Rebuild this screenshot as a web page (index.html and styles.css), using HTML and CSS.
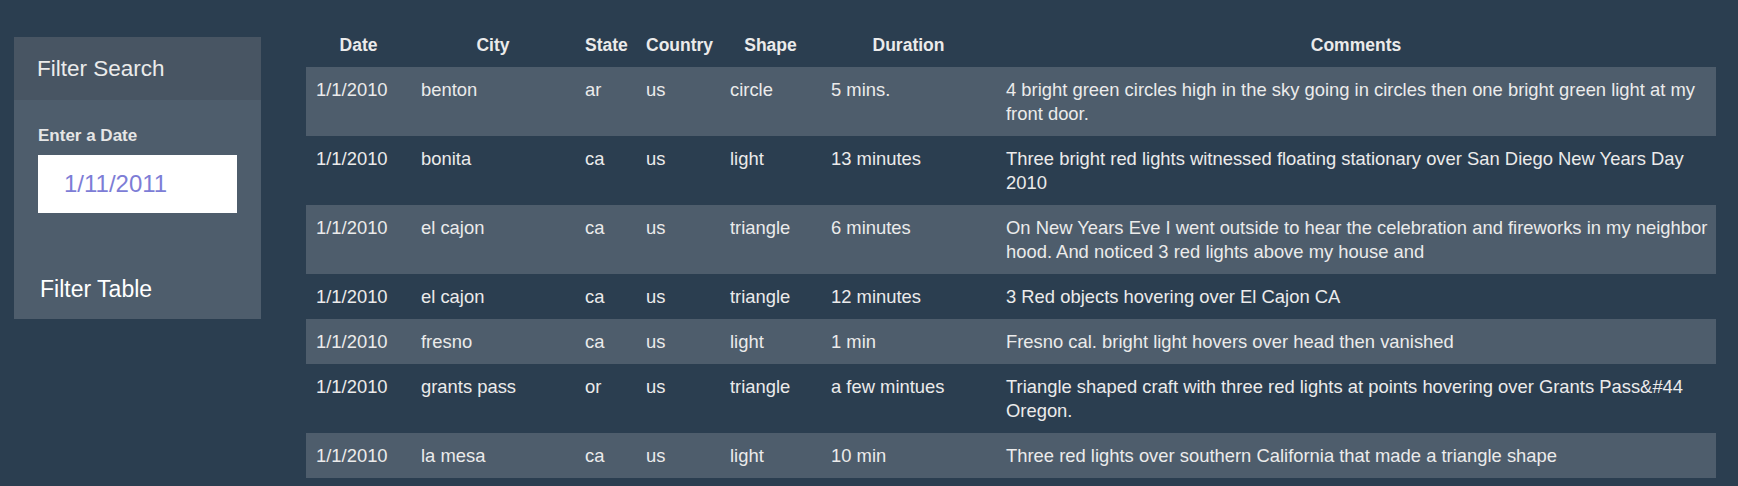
FILE: index.html
```html
<!DOCTYPE html>
<html lang="en">
<head>
<meta charset="utf-8">
<title>UFO Sightings</title>
<link rel="stylesheet" href="styles.css">
</head>
<body>
<div class="page">
  <aside class="sidebar">
    <div class="panel">
      <div class="panel-heading">Filter Search</div>
      <div class="panel-body">
        <label class="field-label" for="datetime">Enter a Date</label>
        <input class="date-input" id="datetime" type="text" placeholder="1/11/2011">
        <button class="filter-btn" type="button">Filter Table</button>
      </div>
    </div>
  </aside>
  <main class="content">
    <table class="ufo-table">
      <colgroup>
        <col class="c-date"><col class="c-city"><col class="c-state"><col class="c-country"><col class="c-shape"><col class="c-duration"><col class="c-comments">
      </colgroup>
      <thead>
        <tr><th>Date</th><th>City</th><th>State</th><th>Country</th><th>Shape</th><th>Duration</th><th>Comments</th></tr>
      </thead>
      <tbody>
        <tr><td>1/1/2010</td><td>benton</td><td>ar</td><td>us</td><td>circle</td><td>5 mins.</td><td class="comment">4 bright green circles high in the sky going in circles then one bright green light at my<br>front door.</td></tr>
        <tr><td>1/1/2010</td><td>bonita</td><td>ca</td><td>us</td><td>light</td><td>13 minutes</td><td class="comment">Three bright red lights witnessed floating stationary over San Diego New Years Day<br>2010</td></tr>
        <tr><td>1/1/2010</td><td>el cajon</td><td>ca</td><td>us</td><td>triangle</td><td>6 minutes</td><td class="comment">On New Years Eve I went outside to hear the celebration and fireworks in my neighbor<br>hood. And noticed 3 red lights above my house and</td></tr>
        <tr><td>1/1/2010</td><td>el cajon</td><td>ca</td><td>us</td><td>triangle</td><td>12 minutes</td><td class="comment">3 Red objects hovering over El Cajon CA</td></tr>
        <tr><td>1/1/2010</td><td>fresno</td><td>ca</td><td>us</td><td>light</td><td>1 min</td><td class="comment">Fresno cal. bright light hovers over head then vanished</td></tr>
        <tr><td>1/1/2010</td><td>grants pass</td><td>or</td><td>us</td><td>triangle</td><td>a few mintues</td><td class="comment">Triangle shaped craft with three red lights at points hovering over Grants Pass&amp;#44<br>Oregon.</td></tr>
        <tr><td>1/1/2010</td><td>la mesa</td><td>ca</td><td>us</td><td>light</td><td>10 min</td><td class="comment">Three red lights over southern California that made a triangle shape</td></tr>
      </tbody>
    </table>
  </main>
</div>
</body>
</html>
```

FILE: styles.css
```css
html, body {
  margin: 0;
  padding: 0;
}

body {
  background: #2b3e50;
  color: #ebebeb;
  font-family: "Liberation Sans", Arial, sans-serif;
}

.page {
  display: flex;
  align-items: flex-start;
  gap: 45px;
  padding: 22px 22px 0 14px;
}

.sidebar {
  flex: 0 0 247px;
  margin-top: 15px;
}

.panel {
  background: #4e5d6c;
}

.panel-heading {
  background: #485563;
  height: 63px;
  line-height: 63px;
  padding-left: 23px;
  font-size: 22.5px;
  color: #ebebeb;
}

.panel-body {
  display: flex;
  flex-direction: column;
  align-items: flex-start;
  padding: 26px 24px 15px 24px;
}

.field-label {
  font-size: 17px;
  font-weight: bold;
  line-height: 20px;
  color: #e6e6e6;
}

.date-input {
  box-sizing: border-box;
  width: 199px;
  height: 58px;
  margin-top: 9px;
  padding: 0 0 0 26px;
  border: none;
  outline: none;
  background: #ffffff;
  font-family: "Liberation Sans", Arial, sans-serif;
  font-size: 24px;
  color: #7d7dd6;
}

.date-input::placeholder {
  color: #7d7dd6;
  opacity: 1;
}

.filter-btn {
  margin-top: 61px;
  margin-left: 2px;
  padding: 0;
  border: none;
  background: transparent;
  font-family: "Liberation Sans", Arial, sans-serif;
  font-size: 23px;
  line-height: 30px;
  color: #ffffff;
}

.content {
  flex: 1 1 auto;
}

.ufo-table {
  width: 100%;
  table-layout: fixed;
  border-collapse: collapse;
  border-spacing: 0;
}

.c-date { width: 105px; }
.c-city { width: 164px; }
.c-state { width: 61px; }
.c-country { width: 84px; }
.c-shape { width: 101px; }
.c-duration { width: 175px; }
.c-comments { width: 720px; }

.ufo-table th {
  padding: 10.5px 10px;
  line-height: 24px;
  font-size: 17.5px;
  font-weight: bold;
  text-align: center;
  color: #ebebeb;
}

.ufo-table td {
  padding: 10.5px 10px;
  line-height: 24px;
  font-size: 18.4px;
  text-align: left;
  vertical-align: top;
  color: #ebebeb;
}

.ufo-table tbody tr:nth-child(odd) {
  background: #4e5d6c;
}

.ufo-table td.comment {
  white-space: nowrap;
}
```
